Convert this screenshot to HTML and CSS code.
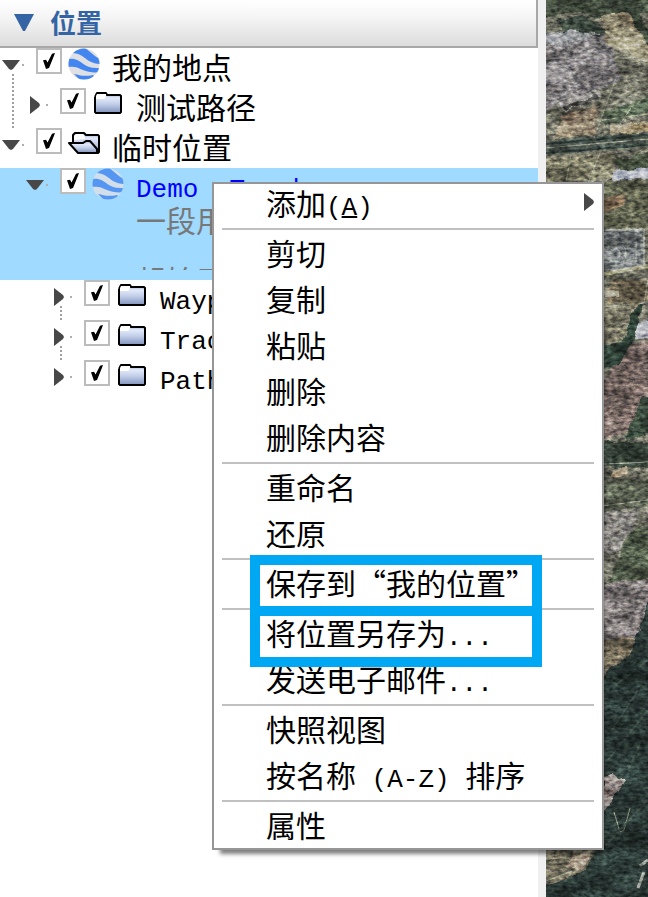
FILE: index.html
```html
<!DOCTYPE html>
<html lang="zh-CN">
<head>
<meta charset="utf-8">
<title>位置</title>
<link rel="stylesheet" href="styles.css">
</head>
<body>
<svg class="defs" aria-hidden="true">
  <defs>
    <linearGradient id="folderFill" x1="0" y1="0" x2="0" y2="1">
      <stop offset="0" stop-color="#8fa3cc"/><stop offset=".25" stop-color="#e2eafa"/><stop offset=".55" stop-color="#c3cfe9"/><stop offset="1" stop-color="#8093bd"/>
    </linearGradient>
    <clipPath id="globeClip"><circle cx="16" cy="16" r="15.500"/></clipPath>
    <symbol id="folder" viewBox="0 0 32 32">
      <path d="M3 9V24L4 25H28L29 24V8L28 7H15L14 5H5L3 9" fill="url(#folderFill)" stroke="#000" stroke-width="2" stroke-linejoin="round"/>
      <path d="M4 8L5 6H14V9L12 11H4Z" fill="#fff"/>
    </symbol>
    <symbol id="folder-open" viewBox="0 0 32 32">
      <path d="M5 14V7L7 5H16L18 7H30L31 8V24L30 25H28" fill="url(#folderFill)" stroke="#000" stroke-width="2" stroke-linejoin="round"/>
      <path d="M6 12V8L8 6H15L17 9V11Z" fill="#fff"/>
      <path d="M1 15H15L18 13H22L29 21V25H10Z" fill="url(#folderFill)" stroke="#000" stroke-width="2" stroke-linejoin="round"/>
    </symbol>
    <symbol id="globe" viewBox="0 0 32 32">
      <g clip-path="url(#globeClip)">
        <rect width="32" height="32" fill="#dfe0e4"/>
        <path d="M4 5C12 5 15 9 21 13C25 15 28 16 32 16V11C27 9 23 4 17 0H9Z" fill="#4386f0"/>
        <path d="M0 11C8 10 11 13 17 17C22 20 26 20 32 20V24C26 25 20 24 15 22C9 19 6 18 0 19Z" fill="#4386f0"/>
        <path d="M6 26C12 27 15 29 25 27L27 29L20 32H12Z" fill="#4386f0"/>
      </g>
    </symbol>
    <symbol id="down" viewBox="0 0 20 10"><path d="M1 0H19L12 9L10 10L8 9Z"/></symbol>
    <symbol id="right" viewBox="0 0 10 20"><path d="M0 1V19L9 12L10 10L9 8Z"/></symbol>
  </defs>
</svg>

<div class="app">
  <section class="panel">
    <header class="panel-header">
      <svg class="panel-arrow" viewBox="0 0 20 17" aria-hidden="true"><path d="M0 0H20L11 17H9Z"/></svg>
      <h1>位置</h1>
    </header>
    <ul class="tree">
      <li>
        <div class="row linked">
          <button class="expander" aria-label="折叠"><svg class="down"><use href="#down"/></svg></button>
          <input type="checkbox" id="p1" checked>
          <svg class="icon"><use href="#globe"/></svg>
          <label for="p1">我的地点</label>
        </div>
        <ul>
          <li>
            <div class="row">
              <button class="expander" aria-label="展开"><svg class="right"><use href="#right"/></svg></button>
              <input type="checkbox" id="p2" checked>
              <svg class="icon"><use href="#folder"/></svg>
              <label for="p2">测试路径</label>
            </div>
          </li>
        </ul>
      </li>
      <li>
        <div class="row">
          <button class="expander" aria-label="折叠"><svg class="down"><use href="#down"/></svg></button>
          <input type="checkbox" id="p3" checked>
          <svg class="icon"><use href="#folder-open"/></svg>
          <label for="p3">临时位置</label>
        </div>
        <ul>
          <li>
            <div class="selected">
              <div class="row">
                <button class="expander" aria-label="折叠"><svg class="down"><use href="#down"/></svg></button>
                <input type="checkbox" id="p4" checked>
                <svg class="icon"><use href="#globe"/></svg>
                <label for="p4" class="latin">Demo  Track</label>
              </div>
              <p class="snippet">一段用<br><br>起始于</p>
            </div>
            <ul>
              <li>
                <div class="row short-link">
                  <button class="expander" aria-label="展开"><svg class="right"><use href="#right"/></svg></button>
                  <input type="checkbox" id="p5" checked>
                  <svg class="icon"><use href="#folder"/></svg>
                  <label for="p5" class="latin">Waypoints</label>
                </div>
              </li>
              <li>
                <div class="row short-link">
                  <button class="expander" aria-label="展开"><svg class="right"><use href="#right"/></svg></button>
                  <input type="checkbox" id="p6" checked>
                  <svg class="icon"><use href="#folder"/></svg>
                  <label for="p6" class="latin">Tracks</label>
                </div>
              </li>
              <li>
                <div class="row">
                  <button class="expander" aria-label="展开"><svg class="right"><use href="#right"/></svg></button>
                  <input type="checkbox" id="p7" checked>
                  <svg class="icon"><use href="#folder"/></svg>
                  <label for="p7" class="latin">Paths</label>
                </div>
              </li>
            </ul>
          </li>
        </ul>
      </li>
    </ul>
  </section>
  <div class="splitter"></div>
  <div class="map">
    <svg viewBox="0 0 102 897" preserveAspectRatio="xMinYMin slice" aria-hidden="true">
      <defs>
        <filter id="grain" x="0" y="0" width="100%" height="100%" color-interpolation-filters="sRGB">
          <feTurbulence type="fractalNoise" baseFrequency=".18 .32" numOctaves="3" seed="8"/>
          <feColorMatrix values="1.500 0 0 0 -.2  1.400 .1 0 0 -.2  1.300 0 .2 0 -.2  0 0 0 0 1"/>
        </filter>
        <filter id="patches" x="0" y="0" width="100%" height="100%" color-interpolation-filters="sRGB">
          <feTurbulence type="fractalNoise" baseFrequency=".03 .06" numOctaves="3" seed="21"/>
          <feColorMatrix values="2 0 0 0 -.5  2 0 0 0 -.5  2 0 0 0 -.5  0 0 0 0 1"/>
        </filter>
        <filter id="rough" x="-5%" y="-5%" width="110%" height="110%" color-interpolation-filters="sRGB">
          <feTurbulence type="fractalNoise" baseFrequency=".09" numOctaves="2" seed="3"/>
          <feDisplacementMap in="SourceGraphic" scale="7" xChannelSelector="R" yChannelSelector="G"/>
        </filter>
      </defs>
      <rect width="102" height="897" fill="#6b6b5c"/>
      <g filter="url(#rough)">
        <path d="M-5 -5H107V12L60 18L30 12L-5 18Z" fill="#3e4939"/>
        <path d="M-5 35L60 25L75 80L50 92L-5 110Z" fill="#787475"/>
        <path d="M55 15L85 12L107 55V65L60 45Z" fill="#8d8468"/>
        <path d="M74 0L86 0L107 40V54Z" fill="#3b4839"/>
        <path d="M10 20L40 17L60 30L55 38L20 33Z" fill="#3a483d"/>
        <path d="M0 35L24 30L58 34L20 44L0 46Z" fill="#94979a"/>
        <path d="M12 102L50 90L56 97L20 112Z" fill="#9a9690"/>
        <path d="M18 107L50 96L54 99L20 110Z" fill="#4d4e49"/>
        <path d="M16 115L54 106L48 136L8 138Z" fill="#8a7961"/>
        <path d="M56 112L107 96V112L58 126Z" fill="#4a5844"/>
        <path d="M64 126L107 121V132L64 134Z" fill="#a99a78"/>
        <path d="M-5 141L107 132V145L-5 154Z" fill="#46524a"/>
        <path d="M-5 158L70 153L66 178L-5 183Z" fill="#7b785e"/>
        <path d="M70 160L107 151V168L72 172Z" fill="#44503b"/>
        <path d="M66 172L107 167V178L66 180Z" fill="#a5acba"/>
        <path d="M50 183L107 180V226L50 230Z" fill="#565943"/>
        <path d="M56 200L80 192L76 207L56 212Z" fill="#786047"/>
        <path d="M62 280H107V300L62 310Z" fill="#756950"/>
        <path d="M58 290L74 291V297L58 298Z" fill="#b2ad94"/>
        <path d="M56 301L90 304L84 340L56 346Z" fill="#6d6a56"/>
        <path d="M82 324L107 320V338L80 338Z" fill="#a2a5b0"/>
        <path d="M80 345L107 340V400L87 430L50 442V400Z" fill="#786660"/>
        <path d="M91 303H98L86 345L72 364L50 370V346L76 342Z" fill="#283b30"/>
        <path d="M98 396L107 400V430L80 442L90 412Z" fill="#344637"/>
        <path d="M50 442H107V468L50 466Z" fill="#344136"/>
        <path d="M64 470L80 467L82 475L65 477Z" fill="#a48e70"/>
        <path d="M50 482L107 478V506L50 512Z" fill="#505746"/>
        <path d="M50 512L92 510L86 545L50 559Z" fill="#7a7772"/>
        <path d="M80 533L107 525V578L64 581Z" fill="#4c5843"/>
        <path d="M50 583L107 578V640L50 642Z" fill="#7b7473"/>
        <path d="M50 640L107 635V655L76 665L50 683Z" fill="#716751"/>
        <path d="M107 589V902H-5V845H50V687L66 666L84 655Z" fill="#263632"/>
        <path d="M58 777L68 773L79 781L68 798L58 810Z" fill="#8c807b"/>
        <path d="M-5 845H52L38 871L17 880L-5 886Z" fill="#6d6854"/>
        <path d="M25 857L46 852L35 870L20 867Z" fill="#a18f77"/>
      </g>
      <path d="M56 230H98V266L56 274Z" fill="#6d7374" stroke="#899084" stroke-width="2"/>
      <path d="M56 244H72Q80 244 80 254T71 262H56M56 249H69Q74 249 74 254T69 258H56M90 234V264" fill="none" stroke="#92958d" stroke-width="1"/>
      <path d="M58 274L102 266" stroke="#aaa782" stroke-width="4"/>
      <g fill="none">
        <path d="M0 144L102 135M0 153L102 145" stroke="#293a34" stroke-width="2"/>
        <path d="M0 148L102 139M25 155L20 182M54 153L42 183M56 307L98 303L102 280M0 881L26 871" stroke="#969a82" stroke-width="1"/>
        <path d="M70 78L48 138M85 108L66 136M102 114L56 120M0 115L16 114M68 812L74 832L78 830L84 808" stroke="#858a72" stroke-width="1"/>
        <path d="M58 464L102 462M57 506L102 500" stroke="#8c9280" stroke-width="1"/>
        <path d="M102 660L70 685M92 690L66 730M102 710L62 760M98 735L82 770M60 845L102 800" stroke="#34453d" stroke-width="2"/>
        <path d="M94 866L102 860M92 888L98 872" stroke="#8e9387" stroke-width="3"/>
      </g>
      <rect class="coarse" width="102" height="897" filter="url(#patches)"/>
      <rect class="fine" width="102" height="897" filter="url(#grain)"/>
    </svg>
  </div>

  <div class="menu">
    <ul class="menu-list">
      <li><button><span>添加<span class="latin">(<u>A</u>)</span></span><svg class="right"><use href="#right"/></svg></button></li>
      <li class="rule"><button>剪切</button></li>
      <li><button>复制</button></li>
      <li><button>粘贴</button></li>
      <li><button>删除</button></li>
      <li><button>删除内容</button></li>
      <li class="rule"><button>重命名</button></li>
      <li><button>还原</button></li>
      <li class="rule"><button>保存到“我的位置”</button></li>
      <li class="rule"><button><span>将位置另存为<span class="latin">...</span></span></button></li>
      <li><button><span>发送电子邮件<span class="latin">...</span></span></button></li>
      <li class="rule"><button>快照视图</button></li>
      <li><button><span>按名称<span class="latin"> (A-Z) </span>排序</span></button></li>
      <li class="rule"><button>属性</button></li>
    </ul>
    <div class="highlight"><div></div><div></div></div>
  </div>
</div>
</body>
</html>
```
FILE: styles.css
```css
* { box-sizing: border-box; }

body {
  margin: 0;
  background: #fff;
  color: #000;
  font-family: "Noto Sans CJK SC", sans-serif;
  font-size: 30px;
  font-weight: 400;
  line-height: 36px;
}

ul, p, h1 { margin: 0; padding: 0; list-style: none; }

button {
  border: 0;
  padding: 0;
  background: none;
  color: inherit;
  font: inherit;
}

.defs { position: absolute; width: 0; height: 0; }

.app {
  position: relative;
  display: flex;
  min-height: 100vh;
  overflow: hidden;
}

.panel { flex: 1; min-width: 0; }

.panel-header {
  display: flex;
  align-items: center;
  gap: 16px;
  height: 48px;
  padding: 0 14px 2px;
  border: solid #a8a8a8;
  border-width: 0 2px 2px 0;
  background: linear-gradient(#fff, #f4f4f4 40%, #dcdcdc);
}

.panel-arrow { width: 20px; height: 17px; fill: #3464a4; }

h1 {
  color: #3464a4;
  font-size: 26px;
  font-weight: 700;
}

.splitter { width: 8px; background: #f0f0f0; }

.map { position: relative; width: 102px; overflow: hidden; background: #263a33; }
.map > svg { position: absolute; inset: 0; width: 100%; height: 100%; filter: saturate(.8); }
.coarse { mix-blend-mode: overlay; opacity: .35; }
.fine { mix-blend-mode: overlay; opacity: .6; }

.latin {
  font-family: "Liberation Mono", monospace;
  font-size: 26px;
  white-space: pre;
}

/* Places tree */
.row {
  position: relative;
  display: flex;
  align-items: flex-start;
  height: 40px;
  white-space: nowrap;
}

.tree ul .row { padding-left: 24px; }
.tree ul ul .row { padding-left: 48px; }

.expander {
  position: relative;
  display: flex;
  align-items: center;
  width: 36px;
  height: 34px;
}

.expander::after {
  content: "";
  position: absolute;
  top: 16px;
  left: 22px;
  width: 2px;
  height: 2px;
  background: #b0b0b0;
}

.down { width: 20px; height: 10px; margin-left: 1px; fill: #484848; }
.right { width: 10px; height: 20px; margin-left: 6px; fill: #484848; }

.linked::before, .short-link::before {
  content: "";
  position: absolute;
  top: 26px;
  left: 12px;
  height: 54px;
  border-left: 2px dotted #a0a0a0;
}

.short-link::before { left: 60px; height: 14px; }

input[type="checkbox"] {
  appearance: none;
  flex: none;
  width: 26px;
  height: 26px;
  margin: 0;
  border: 2px solid #bcbcbc;
  background: #fff;
}

input[type="checkbox"]:checked::before {
  content: "";
  display: block;
  width: 12px;
  height: 16px;
  margin: 3px 5px;
  background: #000;
  clip-path: polygon(0 45%, 25% 42%, 38% 60%, 75% 4%, 100% 0, 90% 20%, 50% 94%, 25% 100%);
}

.icon { flex: none; width: 32px; height: 32px; margin: 0 12px 0 6px; }

.row .latin { padding-top: 4px; }

.selected {
  height: 112px;
  background: #a0daff;
  color: #00f;
}

.selected .icon { opacity: .8; }

.snippet {
  height: 66px;
  margin: -4px 0 0 136px;
  overflow: hidden;
  color: #787878;
  line-height: 30px;
}

/* Context menu */
.menu {
  position: absolute;
  top: 182px;
  left: 212px;
  width: 392px;
  border: 2px solid #969696;
  background: #fff;
  box-shadow: 4px 8px 4px -4px rgba(0, 0, 0, .5);
}

.menu-list { margin: -3px 0 -1px; }

.menu button {
  display: flex;
  align-items: center;
  width: 100%;
  height: 46px;
  padding: 0 8px 4px 52px;
  text-align: left;
  white-space: pre;
}

.menu .latin { line-height: 1; }

.menu .right { margin-left: auto; }

.rule::before {
  content: "";
  display: block;
  height: 2px;
  margin: 1px 8px;
  background: #c0c0c0;
}

.menu u { text-decoration-thickness: 2px; }

.highlight {
  position: absolute;
  top: 371px;
  left: 36px;
  display: grid;
  grid-template-rows: 1fr 1fr;
  gap: 10px;
  width: 292px;
  height: 112px;
  border: 10px solid #00a8f3;
  pointer-events: none;
}

.highlight div { box-shadow: 0 0 0 10px #00a8f3; clip-path: inset(-10px); }
```
